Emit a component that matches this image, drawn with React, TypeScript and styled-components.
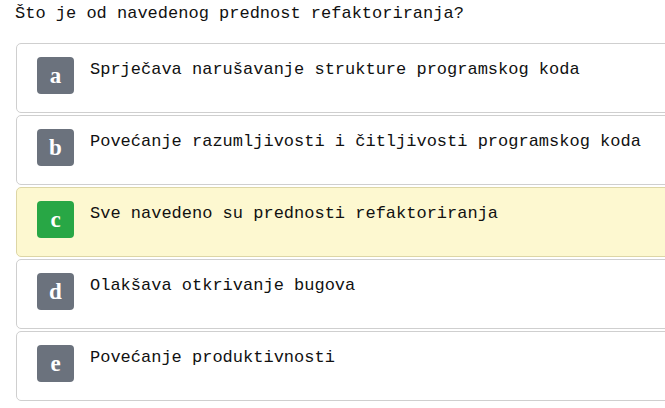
import styled, { createGlobalStyle } from "styled-components";

interface Option {
  key: string;
  text: string;
  correct?: boolean;
}

const options: Option[] = [
  { key: "a", text: "Sprječava narušavanje strukture programskog koda" },
  { key: "b", text: "Povećanje razumljivosti i čitljivosti programskog koda" },
  { key: "c", text: "Sve navedeno su prednosti refaktoriranja", correct: true },
  { key: "d", text: "Olakšava otkrivanje bugova" },
  { key: "e", text: "Povećanje produktivnosti" },
];

export default function App() {
  return (
    <>
      <GlobalStyle />
      <Quiz>
        <Question>Što je od navedenog prednost refaktoriranja?</Question>
        <OptionList>
          {options.map((opt) => (
            <OptionCard key={opt.key} $correct={opt.correct}>
              <Badge $correct={opt.correct}>{opt.key}</Badge>
              <OptionText>{opt.text}</OptionText>
            </OptionCard>
          ))}
        </OptionList>
      </Quiz>
    </>
  );
}

const GlobalStyle = createGlobalStyle`
  html, body {
    margin: 0;
    padding: 0;
    background: #ffffff;
    overflow: hidden;
  }
`;

// the answer cards are wider than the window in the original, so clip them
const Quiz = styled.div`
  width: 665px;
  box-sizing: border-box;
  overflow: hidden;
  padding: 2px 0 0 15px;
  font-family: "Liberation Mono", "Courier New", monospace;
  color: #111111;
`;

const Question = styled.div`
  font-size: 17px;
  line-height: 24px;
  margin-bottom: 17px;
`;

const OptionList = styled.ul`
  list-style: none;
  margin: 0;
  padding: 0;
  display: flex;
  flex-direction: column;
  gap: 2px;
`;

const OptionCard = styled.li<{ $correct?: boolean }>`
  box-sizing: border-box;
  width: 720px;
  height: 70px;
  margin-left: 1px;
  padding: 13px 20px;
  display: flex;
  align-items: flex-start;
  gap: 16px;
  border: 1px solid ${(p) => (p.$correct ? "#ddd6a6" : "#cfcfcf")};
  border-radius: 5px;
  background: ${(p) => (p.$correct ? "#fdf8d0" : "#ffffff")};
`;

const Badge = styled.span<{ $correct?: boolean }>`
  flex-shrink: 0;
  width: 37px;
  height: 37px;
  border-radius: 4px;
  background: ${(p) => (p.$correct ? "#28a745" : "#6b727d")};
  color: #ffffff;
  display: flex;
  align-items: center;
  justify-content: center;
  font-family: "Liberation Serif", "DejaVu Serif", serif;
  font-weight: 700;
  font-size: 23px;
  line-height: 1;
`;

const OptionText = styled.span`
  font-size: 17px;
  line-height: 25px;
  color: #111111;
`;
